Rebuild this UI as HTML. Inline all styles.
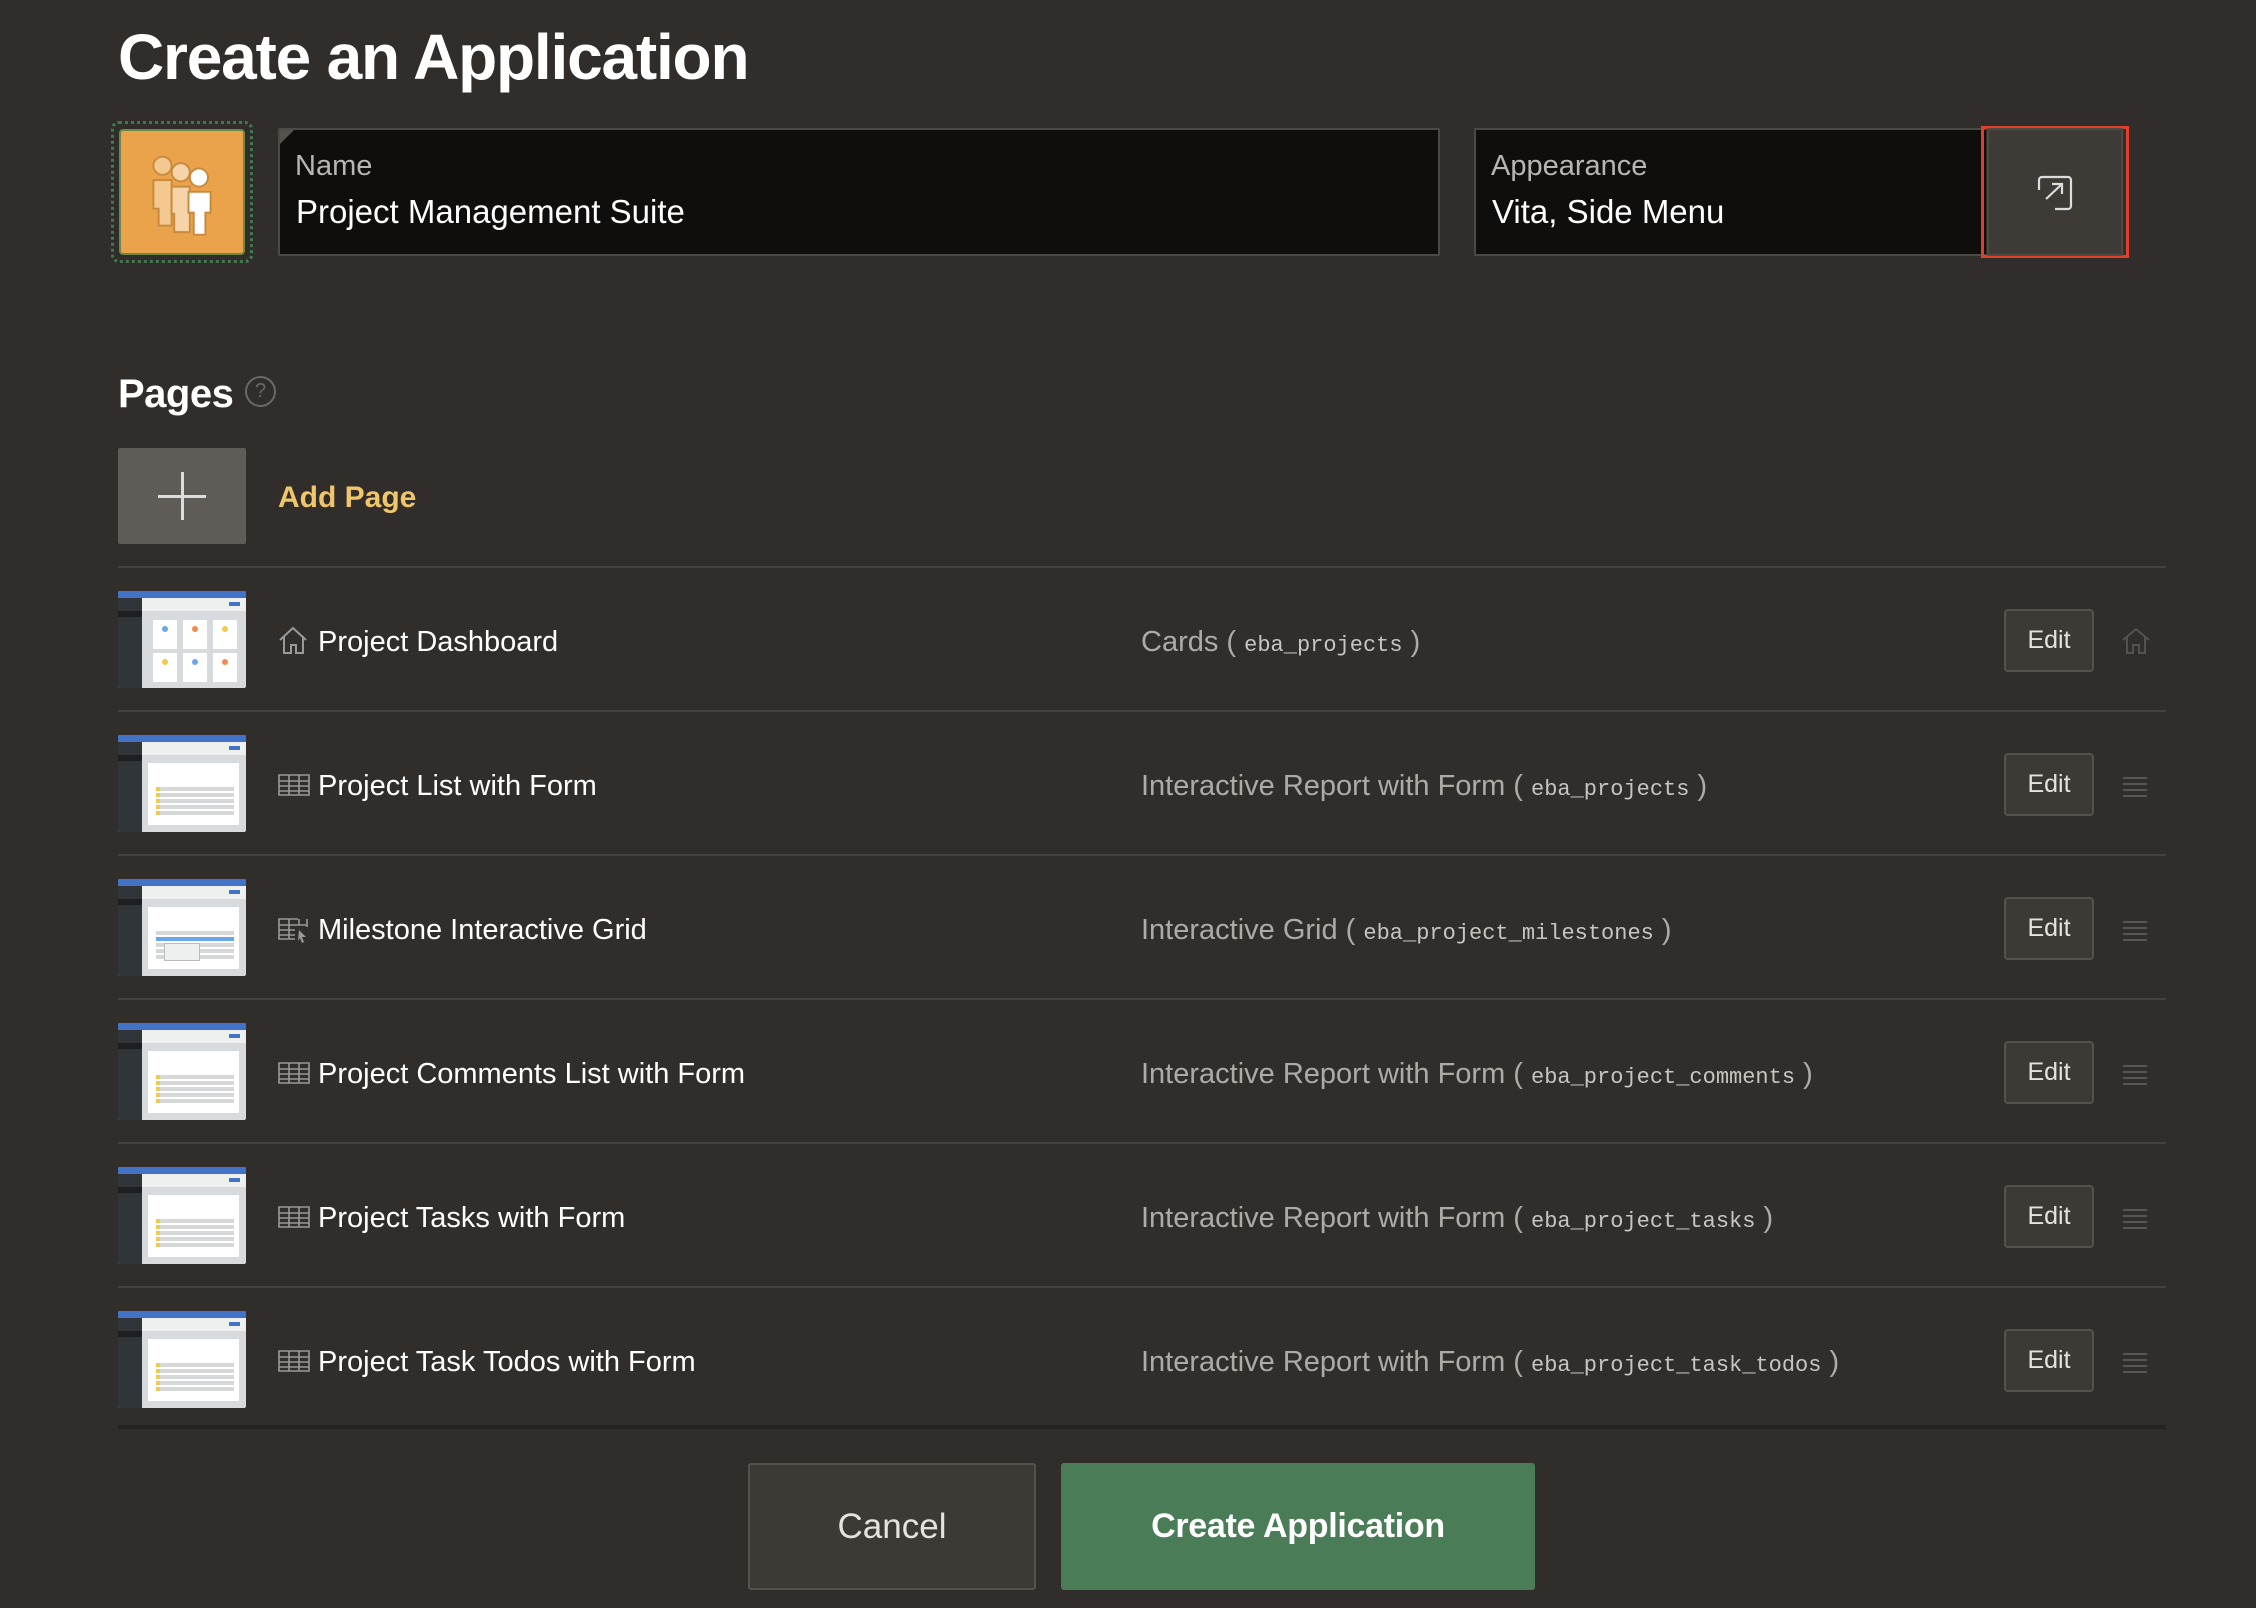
<!DOCTYPE html>
<html><head><meta charset="utf-8"><style>
*{margin:0;padding:0;box-sizing:border-box}
body{width:2256px;height:1608px;background:#312d2a;font-family:"Liberation Sans",sans-serif;color:#fff;position:relative;overflow:hidden}
.a{position:absolute}
h1{position:absolute;left:118px;top:20px;font-size:64px;font-weight:bold;letter-spacing:-1.2px;color:#fff}
.field{position:absolute;top:128px;height:128px;background:#0f0e0d;border:2px solid #4d4945;border-radius:2px}
.lbl{position:absolute;left:15px;top:20px;font-size:29px;color:#b9b5b1}
.val{position:absolute;left:16px;top:63px;font-size:33px;color:#fff}
.thumb{position:absolute;left:118px;width:128px;height:97px;background:#d8dbdd;overflow:hidden;border-radius:2px}
.thumb .tb{position:absolute;left:0;top:0;width:128px;height:7px;background:#4472c4}
.thumb .hd{position:absolute;left:24px;top:7px;width:104px;height:13px;background:#eef0f0}
.thumb .hd i{position:absolute;right:6px;top:4px;width:11px;height:4px;background:#4472c4}
.thumb .sb{position:absolute;left:0;top:7px;width:24px;height:90px;background:#30353a}
.thumb .sb i{position:absolute;left:0;top:13px;width:24px;height:6px;background:#1d1f21}
.thumb .card{position:absolute;left:30px;top:28px;width:91px;height:62px;background:#fff}
.rowtxt{position:absolute;left:318px;font-size:29px;color:#fff}
.ricon{position:absolute;left:278px}
.type{position:absolute;left:1141px;font-size:29px;color:#aeaaa6}
.type code{font-family:"Liberation Mono",monospace;font-size:22px;color:#c8c4c0}
.edit{position:absolute;left:2004px;width:90px;height:63px;background:#3d3a36;border:2px solid #55514d;border-radius:4px;font-size:25px;color:#e6e2de;text-align:center;line-height:59px}
.sep{position:absolute;left:118px;width:2048px;height:2px;background:#45413d}
.drag{position:absolute;left:2123px;width:24px}
.drag i{display:block;height:2px;background:#5a5652;margin-bottom:4px}
</style></head><body>
<h1>Create an Application</h1>

<div class="a" style="left:111px;top:121px;width:142px;height:142px;border:3px dotted #3f7a4f;border-radius:8px"></div>
<div class="a" style="left:119px;top:129px;width:126px;height:126px;background:#eba34b;border:2px solid #6b8a4a;border-radius:4px">
<svg width="126" height="126" viewBox="0 0 126 126" style="position:absolute;left:-2px;top:-2px"><g transform="translate(63 68) scale(1.3) translate(-60 -68)">
<circle cx="45" cy="44" r="7" fill="#f4c990" stroke="#c78a3e" stroke-width="1.5"/>
<path d="M38 55h14v35h-10v-13h-4z" fill="#f4c990" stroke="#c78a3e" stroke-width="1.5"/>
<circle cx="59" cy="49" r="7" fill="#f6d3a8" stroke="#c78a3e" stroke-width="1.5"/>
<path d="M52 60h14v35h-12v-14h-2z" fill="#f6d3a8" stroke="#c78a3e" stroke-width="1.5"/>
<circle cx="73" cy="53" r="7" fill="#fff" stroke="#c78a3e" stroke-width="1.5"/>
<path d="M65 64h17v16h-4v17h-9v-17h-4z" fill="#fff" stroke="#c78a3e" stroke-width="1.5"/>
</g></svg></div>

<div class="field" style="left:278px;width:1162px"><div class="a" style="left:0;top:0;width:0;height:0;border-top:14px solid #55514d;border-right:14px solid transparent"></div><div class="lbl">Name</div><div class="val">Project Management Suite</div></div>
<div class="field" style="left:1474px;width:512px;border-right:none"><div class="lbl">Appearance</div><div class="val">Vita, Side Menu</div></div>
<div class="a" style="left:1981px;top:126px;width:148px;height:132px;border:3px solid #e0402a"></div>
<div class="a" style="left:1987px;top:128px;width:136px;height:128px;background:#3e3b37;border:2px solid #4d4945;border-radius:2px">
<svg width="40" height="40" viewBox="0 0 40 40" style="position:absolute;left:46px;top:42px"><path d="M4 18V8a3 3 0 0 1 3-3h26a3 3 0 0 1 3 3v26a3 3 0 0 1-3 3H20M11 27l16-15M17 12h10v10" fill="none" stroke="#ddd" stroke-width="2.2"/></svg></div>

<div class="a" style="left:118px;top:372px;font-size:40px;font-weight:bold;letter-spacing:-0.5px">Pages</div>
<div class="a" style="left:245px;top:376px;width:31px;height:31px;border:2px solid #6b6763;border-radius:50%;color:#6b6763;font-size:20px;text-align:center;line-height:27px">?</div>

<div class="a" style="left:118px;top:448px;width:128px;height:96px;background:#5f5b57;border-radius:2px"><div class="a" style="left:63px;top:24px;width:3px;height:48px;background:#ddd"></div><div class="a" style="left:40px;top:47px;width:48px;height:3px;background:#ddd"></div></div>
<div class="a" style="left:278px;top:481px;font-size:30px;font-weight:bold;color:#f0c66a">Add Page</div>
<div class="sep" style="top:566px"></div>

<div class="thumb" style="top:591px"><div class="tb"></div><div class="hd"><i></i></div><div class="sb"><i></i></div>
<div class="a" style="left:35px;top:29px;width:24px;height:29px;background:#fff"></div><div class="a" style="left:65px;top:29px;width:24px;height:29px;background:#fff"></div><div class="a" style="left:95px;top:29px;width:24px;height:29px;background:#fff"></div>
<div class="a" style="left:35px;top:62px;width:24px;height:29px;background:#fff"></div><div class="a" style="left:65px;top:62px;width:24px;height:29px;background:#fff"></div><div class="a" style="left:95px;top:62px;width:24px;height:29px;background:#fff"></div>
<div class="a" style="left:44px;top:35px;width:6px;height:6px;border-radius:50%;background:#6aa7e8"></div><div class="a" style="left:74px;top:35px;width:6px;height:6px;border-radius:50%;background:#ee8a52"></div><div class="a" style="left:104px;top:35px;width:6px;height:6px;border-radius:50%;background:#f2c94c"></div>
<div class="a" style="left:44px;top:68px;width:6px;height:6px;border-radius:50%;background:#f2c94c"></div><div class="a" style="left:74px;top:68px;width:6px;height:6px;border-radius:50%;background:#6aa7e8"></div><div class="a" style="left:104px;top:68px;width:6px;height:6px;border-radius:50%;background:#ee8a52"></div>
</div>
<svg class="ricon" style="top:626px" width="32" height="30" viewBox="0 0 32 30"><path d="M2 14L15 2l13 12M6 10v17h7v-8h5v8h7V10" fill="none" stroke="#999" stroke-width="2"/></svg>
<div class="rowtxt" style="top:626px">Project Dashboard</div>
<div class="type" style="top:626px">Cards ( <code>eba_projects</code> )</div>
<div class="edit" style="top:609px">Edit</div>
<svg class="a" style="left:2121px;top:627px" width="30" height="28" viewBox="0 0 30 28"><path d="M2 13L15 2l13 11M6 10v16h6v-8h6v8h6V10" fill="none" stroke="#55514d" stroke-width="2"/></svg>
<div class="sep" style="top:710px"></div>

<div class="thumb" style="top:735px"><div class="tb"></div><div class="hd"><i></i></div><div class="sb"><i></i></div><div class="card"><div class="a" style="left:8px;top:24px;width:78px;height:30px;background:repeating-linear-gradient(#d5d7d9 0 4px,#fff 4px 6px)"></div><div class="a" style="left:8px;top:24px;width:4px;height:30px;background:repeating-linear-gradient(#f2c94c 0 4px,#fff 4px 6px)"></div></div></div>
<svg class="ricon" style="top:774px" width="32" height="22" viewBox="0 0 32 22"><path d="M1 1h30v20H1zM1 7h30M1 12h30M1 17h30M11 1v20M21 1v20" fill="none" stroke="#999" stroke-width="1.6"/></svg>
<div class="rowtxt" style="top:770px">Project List with Form</div>
<div class="type" style="top:770px">Interactive Report with Form ( <code>eba_projects</code> )</div>
<div class="edit" style="top:753px">Edit</div>
<div class="drag" style="top:777px"><i></i><i></i><i></i><i></i></div>
<div class="sep" style="top:854px"></div>

<div class="thumb" style="top:879px"><div class="tb"></div><div class="hd"><i></i></div><div class="sb"><i></i></div><div class="card"><div class="a" style="left:8px;top:24px;width:78px;height:30px;background:repeating-linear-gradient(#d5d7d9 0 4px,#fff 4px 6px)"></div><div class="a" style="left:8px;top:30px;width:78px;height:4px;background:#6aa7e8"></div><div class="a" style="left:16px;top:36px;width:36px;height:18px;background:#eef0f0;border:1px solid #bbb"></div></div></div>
<svg class="ricon" style="top:918px" width="32" height="30" viewBox="0 0 32 30"><path d="M20 1H1v20h16M1 7h28M1 12h16M1 17h16M11 1v20M21 1v6M29 1v8" fill="none" stroke="#999" stroke-width="1.6"/><path d="M21 12l7 7h-4l2 5-2 1-2-5-2 3z" fill="#999"/></svg>
<div class="rowtxt" style="top:914px">Milestone Interactive Grid</div>
<div class="type" style="top:914px">Interactive Grid ( <code>eba_project_milestones</code> )</div>
<div class="edit" style="top:897px">Edit</div>
<div class="drag" style="top:921px"><i></i><i></i><i></i><i></i></div>
<div class="sep" style="top:998px"></div>

<div class="thumb" style="top:1023px"><div class="tb"></div><div class="hd"><i></i></div><div class="sb"><i></i></div><div class="card"><div class="a" style="left:8px;top:24px;width:78px;height:30px;background:repeating-linear-gradient(#d5d7d9 0 4px,#fff 4px 6px)"></div><div class="a" style="left:8px;top:24px;width:4px;height:30px;background:repeating-linear-gradient(#f2c94c 0 4px,#fff 4px 6px)"></div></div></div>
<svg class="ricon" style="top:1062px" width="32" height="22" viewBox="0 0 32 22"><path d="M1 1h30v20H1zM1 7h30M1 12h30M1 17h30M11 1v20M21 1v20" fill="none" stroke="#999" stroke-width="1.6"/></svg>
<div class="rowtxt" style="top:1058px">Project Comments List with Form</div>
<div class="type" style="top:1058px">Interactive Report with Form ( <code>eba_project_comments</code> )</div>
<div class="edit" style="top:1041px">Edit</div>
<div class="drag" style="top:1065px"><i></i><i></i><i></i><i></i></div>
<div class="sep" style="top:1142px"></div>

<div class="thumb" style="top:1167px"><div class="tb"></div><div class="hd"><i></i></div><div class="sb"><i></i></div><div class="card"><div class="a" style="left:8px;top:24px;width:78px;height:30px;background:repeating-linear-gradient(#d5d7d9 0 4px,#fff 4px 6px)"></div><div class="a" style="left:8px;top:24px;width:4px;height:30px;background:repeating-linear-gradient(#f2c94c 0 4px,#fff 4px 6px)"></div></div></div>
<svg class="ricon" style="top:1206px" width="32" height="22" viewBox="0 0 32 22"><path d="M1 1h30v20H1zM1 7h30M1 12h30M1 17h30M11 1v20M21 1v20" fill="none" stroke="#999" stroke-width="1.6"/></svg>
<div class="rowtxt" style="top:1202px">Project Tasks with Form</div>
<div class="type" style="top:1202px">Interactive Report with Form ( <code>eba_project_tasks</code> )</div>
<div class="edit" style="top:1185px">Edit</div>
<div class="drag" style="top:1209px"><i></i><i></i><i></i><i></i></div>
<div class="sep" style="top:1286px"></div>

<div class="thumb" style="top:1311px"><div class="tb"></div><div class="hd"><i></i></div><div class="sb"><i></i></div><div class="card"><div class="a" style="left:8px;top:24px;width:78px;height:30px;background:repeating-linear-gradient(#d5d7d9 0 4px,#fff 4px 6px)"></div><div class="a" style="left:8px;top:24px;width:4px;height:30px;background:repeating-linear-gradient(#f2c94c 0 4px,#fff 4px 6px)"></div></div></div>
<svg class="ricon" style="top:1350px" width="32" height="22" viewBox="0 0 32 22"><path d="M1 1h30v20H1zM1 7h30M1 12h30M1 17h30M11 1v20M21 1v20" fill="none" stroke="#999" stroke-width="1.6"/></svg>
<div class="rowtxt" style="top:1346px">Project Task Todos with Form</div>
<div class="type" style="top:1346px">Interactive Report with Form ( <code>eba_project_task_todos</code> )</div>
<div class="edit" style="top:1329px">Edit</div>
<div class="drag" style="top:1353px"><i></i><i></i><i></i><i></i></div>
<div class="a" style="left:118px;top:1425px;width:2048px;height:4px;background:#262320"></div>

<div class="a" style="left:748px;top:1463px;width:288px;height:127px;background:#3d3a36;border:2px solid #55514d;border-radius:3px;font-size:35px;color:#e6e2de;text-align:center;line-height:123px">Cancel</div>
<div class="a" style="left:1061px;top:1463px;width:474px;height:127px;background:#4a7d57;border-radius:3px;font-size:34px;font-weight:bold;color:#fff;text-align:center;line-height:127px;letter-spacing:-0.3px">Create Application</div>
</body></html>
